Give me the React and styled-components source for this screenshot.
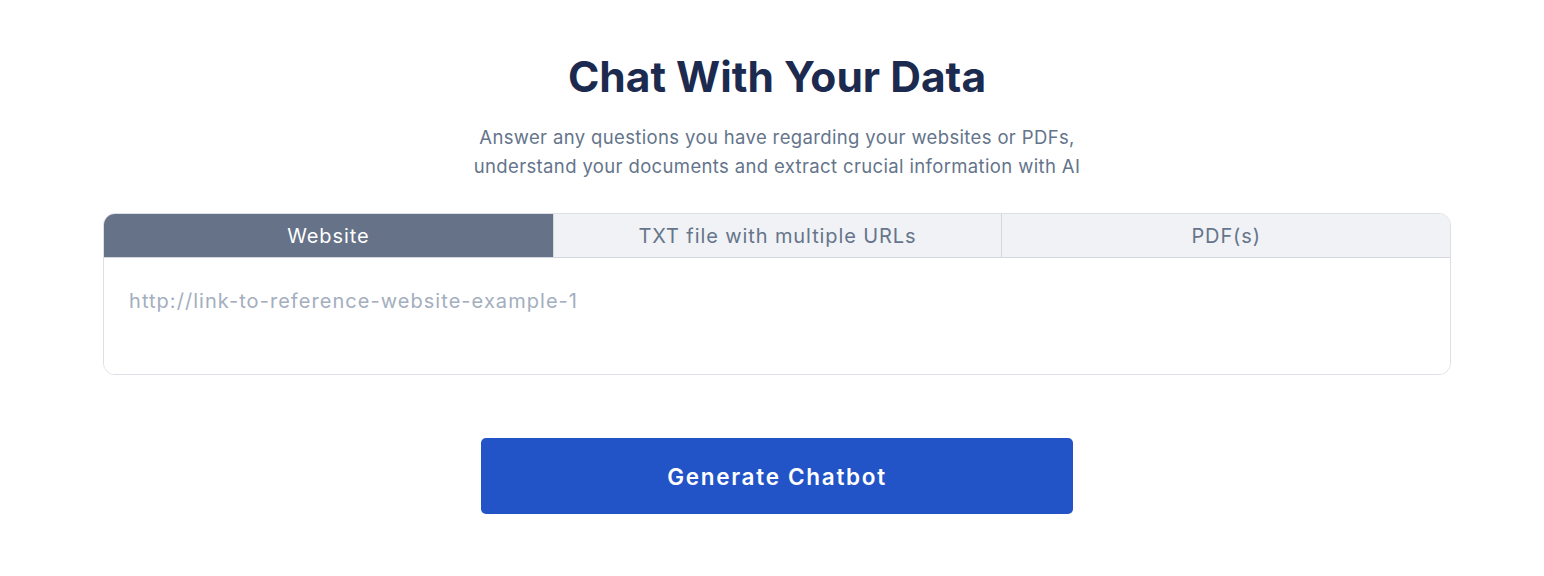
import React from "react";
import styled, { createGlobalStyle } from "styled-components";

const Global = createGlobalStyle`
  html, body { margin: 0; padding: 0; background: #ffffff; }
  body { font-family: Inter, "Noto Sans", sans-serif; }
  * { box-sizing: border-box; }
`;

const Page = styled.main`
  display: flex;
  flex-direction: column;
  align-items: center;
  padding: 51px 93px 0 103px;
`;

const Title = styled.h1`
  margin: 0;
  font-size: 42.5px;
  line-height: 52px;
  font-weight: 700;
  color: #1b2a4e;
  letter-spacing: 0;
`;

const Subtitle = styled.p`
  margin: 20px 0 0;
  font-size: 18.5px;
  line-height: 29px;
  color: #64748b;
  text-align: center;
  letter-spacing: 0.36px;
`;

const Card = styled.section`
  width: 100%;
  margin-top: 32px;
  border: 1px solid #dcdfe4;
  border-radius: 12px;
  overflow: hidden;
`;

const Tabs = styled.div`
  display: grid;
  grid-template-columns: repeat(3, 1fr);
  height: 44px;
  border-bottom: 1px solid #d4d8de;
`;

const Tab = styled.button`
  border: none;
  border-left: ${(p) => (p.$first ? "none" : "1px solid #d4d8de")};
  background: ${(p) => (p.$active ? "#657287" : "#f0f2f5")};
  color: ${(p) => (p.$active ? "#ffffff" : "#66758b")};
  font-family: Inter, "Noto Sans", sans-serif;
  font-size: 20px;
  letter-spacing: 0.9px;
  padding: 1px 0 0;
  cursor: pointer;
`;

const Input = styled.textarea`
  display: block;
  width: 100%;
  height: 116px;
  border: none;
  resize: none;
  outline: none;
  padding: 30px 25px 28px;
  font-family: Inter, "Noto Sans", sans-serif;
  font-size: 20px;
  line-height: 26px;
  letter-spacing: 1.05px;
  color: #334155;
  &::placeholder { color: #a3aebe; }
`;

const Button = styled.button`
  margin-top: 63px;
  width: 592px;
  height: 76px;
  border: none;
  border-radius: 5px;
  background: #2254c8;
  color: #ffffff;
  font-family: Inter, "Noto Sans", sans-serif;
  font-size: 22.5px;
  font-weight: 600;
  letter-spacing: 1.7px;
  cursor: pointer;
`;

export default function App() {
  const tabs = ["Website", "TXT file with multiple URLs", "PDF(s)"];
  return (
    <>
      <Global />
      <Page>
        <Title>Chat With Your Data</Title>
        <Subtitle>
          Answer any questions you have regarding your websites or PDFs,
          <br />
          understand your documents and extract crucial information with AI
        </Subtitle>
        <Card>
          <Tabs>
            {tabs.map((t, i) => (
              <Tab key={t} $active={i === 0} $first={i === 0}>
                {t}
              </Tab>
            ))}
          </Tabs>
          <Input placeholder="http://link-to-reference-website-example-1" />
        </Card>
        <Button>Generate Chatbot</Button>
      </Page>
    </>
  );
}
